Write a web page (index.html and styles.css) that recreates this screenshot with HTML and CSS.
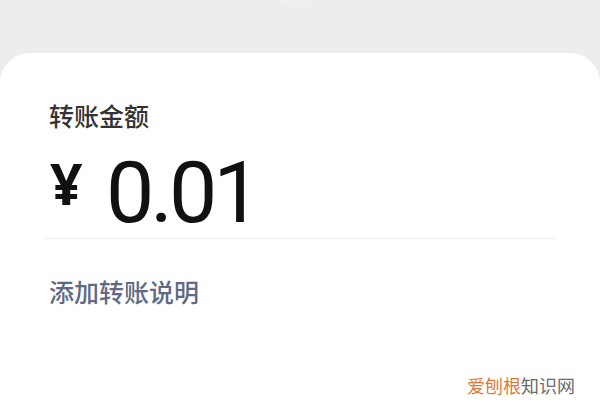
FILE: index.html
```html
<!DOCTYPE html>
<html>
<head>
<meta charset="utf-8">
<link rel="stylesheet" href="styles.css">
</head>
<body>
<div class="top"><span class="top-text">0.01</span></div>
<div class="card">
  <div class="label">转账金额</div>
  <div class="amount"><span class="yen">¥</span><span class="num">0.01</span></div>
  <div class="divider"></div>
  <div class="note">添加转账说明</div>
  <div class="watermark"><span class="wm-a">爱刨根</span><span class="wm-b">知识网</span></div>
</div>
</body>
</html>
```
FILE: styles.css
```css
html, body {
  margin: 0;
  padding: 0;
}
body {
  width: 600px;
  height: 405px;
  overflow: hidden;
  background: #ededed;
  font-family: "Noto Sans CJK SC", "Noto Sans", sans-serif;
}
.top {
  height: 53px;
  display: flex;
  justify-content: center;
  overflow: hidden;
}
.top-text {
  font-family: Roboto, sans-serif;
  font-size: 22px;
  line-height: 22px;
  color: #f6f6f6;
  margin-top: -17px;
  margin-left: 2px;
}
.card {
  background: #fff;
  border-radius: 30px 30px 0 0;
  height: 352px;
  padding: 0 46px 0 46px;
  box-sizing: border-box;
  display: flex;
  flex-direction: column;
}
.label {
  margin-top: 46px;
  margin-left: 3px;
  font-size: 25px;
  font-weight: 500;
  line-height: 32px;
  color: #333;
}
.amount {
  margin-top: 12px;
  height: 80px;
  line-height: 80px;
  margin-left: 4px;
  white-space: nowrap;
}
.yen {
  font-family: "Noto Sans", sans-serif;
  font-weight: 700;
  font-size: 57px;
  color: #111;
  vertical-align: 17px;
  display: inline-block;
  width: 56px;
}
.num {
  font-family: Roboto, sans-serif;
  font-size: 86px;
  font-weight: 400;
  color: #111;
  letter-spacing: -4px;
}
.divider {
  height: 1px;
  background: #efefef;
  margin-top: 15px;
  margin-right: -1px;
  margin-left: -1px;
}
.note {
  margin-top: 36px;
  margin-left: 3px;
  font-size: 25px;
  font-weight: 500;
  line-height: 32px;
  color: #5f6a84;
}
.watermark {
  align-self: flex-end;
  margin-top: 68px;
  margin-right: -21px;
  font-size: 18px;
  line-height: 20px;
}
.wm-a { color: #de7a3c; }
.wm-b { color: #6a6a6a; }
```
